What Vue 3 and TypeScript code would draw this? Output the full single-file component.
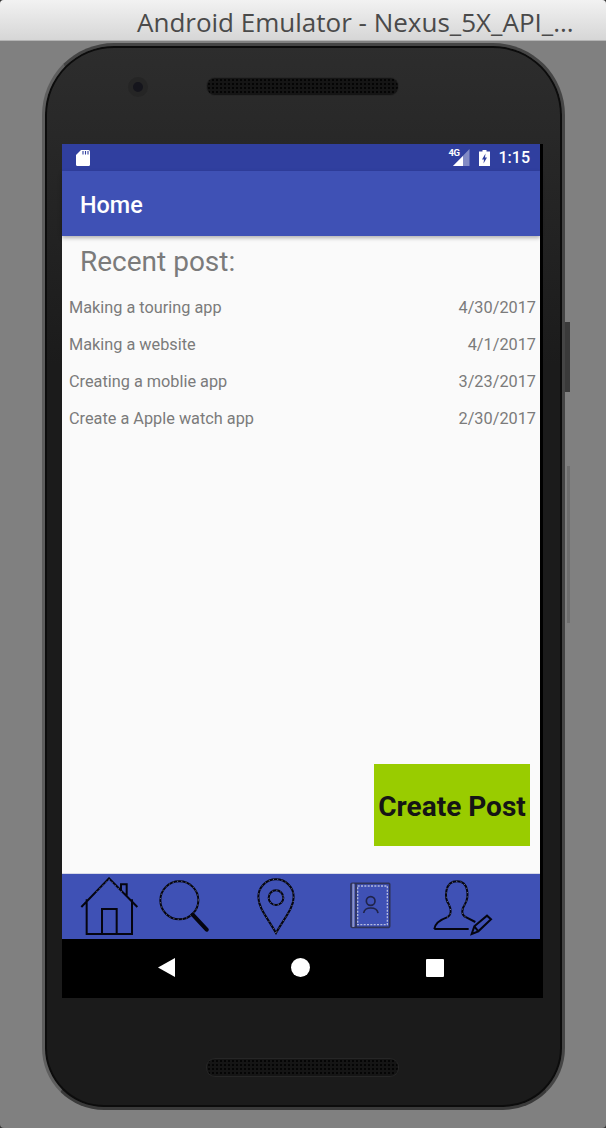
<template>
  <div class="window">
    <div class="titlebar">Android Emulator - Nexus_5X_API_...</div>
    <div class="stage">
      <div class="phone">
        <span class="camera"></span>
        <span class="side-btn power"></span>
        <span class="side-btn volume"></span>
        <div class="bezel-top">
          <div class="speaker"></div>
        </div>
        <div class="screen">
          <div class="statusbar">
            <svg class="sd" viewBox="0 0 14 16">
              <path d="M5 0H12.5Q14 0 14 1.5V14.5Q14 16 12.5 16H1.5Q0 16 0 14.5V5Z" fill="#fff" />
              <path d="M7 1V4.5M9.5 1V4.5M12 1V4.5" stroke="#303f9f" stroke-width="1.1" />
            </svg>
            <span class="status-right">
              <svg class="signal" viewBox="0 0 17 17">
                <path d="M16.5 0V17H0Z" fill="#fff" opacity=".4" />
                <path d="M10 7V17H0Z" fill="#fff" />
              </svg>
              <span class="net">4G</span>
              <svg class="battery" viewBox="0 0 11 16">
                <path d="M3.5 0H7.5V1.5H11V16H0V1.5H3.5Z" fill="#fff" />
                <path d="M6.5 3.5L3 9.5H5L4.5 13.5L8 7.5H6Z" fill="#303f9f" />
              </svg>
              <span class="time">1:15</span>
            </span>
          </div>
          <div class="appbar">Home</div>
          <div class="content">
            <div class="heading">Recent post:</div>
            <div v-for="post in posts" :key="post.title" class="post">
              <span>{{ post.title }}</span>
              <span>{{ post.date }}</span>
            </div>
            <button class="create">Create Post</button>
          </div>
          <div class="tabs">
            <svg class="tab-home" viewBox="60 38 176 176">
              <path d="M64 128L147 42L232 128M183 80V60H200V97M80 105V209H216V105M126 209V134H170V209" />
              <path class="dots" d="M110 82L147 44L185 82" />
            </svg>
            <svg class="tab-search" viewBox="296 45 152 158">
              <circle cx="357" cy="106" r="57" />
              <circle class="dots" cx="357" cy="106" r="57" />
              <path class="handle" d="M397 149L439 194" />
            </svg>
            <svg class="tab-pin" viewBox="590 40 120 170">
              <path d="M650 205C625 160 597 130 597 97A53 53 0 1 1 703 97C703 130 675 160 650 205Z" />
              <circle cx="650" cy="99" r="22" />
              <path class="dots" d="M650 205C625 160 597 130 597 97A53 53 0 1 1 703 97C703 130 675 160 650 205Z" />
              <circle class="dots" cx="650" cy="99" r="22" />
            </svg>
            <svg class="tab-book" viewBox="148 55 122 140">
              <rect class="cover" x="151" y="59" width="116" height="132" rx="3" />
              <path class="spine" d="M158 60V190" />
              <path class="cover" d="M166 60V190" />
              <rect class="page" x="171" y="67" width="89" height="116" />
              <circle class="face" cx="210" cy="112" r="13" />
              <path class="face" d="M189 148C191 128 229 128 232 148" />
            </svg>
            <svg class="tab-user" viewBox="398 46 180 168">
              <path d="M402 193C404 175 420 165 440 158C455 150 452 132 445 118C432 100 432 50 470 50C508 50 505 100 494 118C485 132 480 150 498 158L525 172M402 193H505" />
              <path class="dots" d="M440 158C455 150 452 132 445 118C432 100 432 50 470 50C508 50 505 100 494 118C485 132 480 150 498 158" />
              <path d="M514 208L522 185L560 153L572 164L534 200ZM522 185L534 200" />
            </svg>
          </div>
          <div class="navbar">
            <svg class="nav-back" viewBox="0 0 17 19"><path d="M17 0V19L0 9.5Z" /></svg>
            <svg class="nav-home" viewBox="0 0 19 19"><circle cx="9.5" cy="9.5" r="9.5" /></svg>
            <svg class="nav-recent" viewBox="0 0 18 18"><rect width="18" height="18" rx="1" /></svg>
          </div>
        </div>
        <div class="bezel-bottom">
          <div class="speaker"></div>
        </div>
      </div>
    </div>
  </div>
</template>

<script setup lang="ts">
interface Post {
  title: string;
  date: string;
}

const posts: Post[] = [
  { title: 'Making a touring app', date: '4/30/2017' },
  { title: 'Making a website', date: '4/1/2017' },
  { title: 'Creating a moblie app', date: '3/23/2017' },
  { title: 'Create a Apple watch app', date: '2/30/2017' },
];
</script>

<style>
html,
body {
  margin: 0;
  background: #333;
}
</style>

<style scoped>
.window {
  width: 606px;
  height: 1128px;
  display: flex;
  flex-direction: column;
  background: #808080;
  border-radius: 4px;
  overflow: hidden;
  font-family: Roboto, sans-serif;
}

.titlebar {
  height: 41px;
  flex: none;
  box-sizing: border-box;
  padding: 6px 0 0 137px;
  font-family: "Open Sans", sans-serif;
  font-size: 26px;
  line-height: 32px;
  white-space: nowrap;
  color: #4a4a4a;
  background: linear-gradient(#f2f2f2, #d6d6d6);
  border-bottom: 1px solid #b4b4b4;
}

.stage {
  flex: 1;
  padding: 2px 0 0 42px;
}

.phone {
  position: relative;
  width: 523px;
  height: 1067px;
  box-sizing: border-box;
  border: 3px solid #454545;
  border-left-color: #5e5e5e;
  border-bottom-color: #3a3a3a;
  border-radius: 72px 72px 62px 62px;
  box-shadow: inset 0 0 0 2px #0c0c0c;
  background: linear-gradient(#2d2d2d, #1b1b1b 30%, #1b1b1b);
  padding-left: 17px;
}

.camera {
  position: absolute;
  left: 83px;
  top: 31px;
  width: 10px;
  height: 10px;
  border-radius: 50%;
  background: #15151c;
  border: 5px solid #252525;
}

.side-btn {
  position: absolute;
}

.power {
  right: -8px;
  top: 276px;
  width: 5px;
  height: 70px;
  background: #3a3a3a;
}

.volume {
  right: -8px;
  top: 420px;
  width: 3px;
  height: 157px;
  background: #6e6e6e;
}

.bezel-top {
  height: 98px;
  box-sizing: border-box;
  padding: 32px 0 0 145px;
}

.bezel-bottom {
  padding: 61px 0 0 145px;
}

.speaker {
  width: 191px;
  height: 17px;
  border-radius: 8px;
  background: #151515 radial-gradient(#050505 35%, transparent 45%) 0 0 / 4px 4px;
  box-shadow: 0 0 0 1px #262626;
}

.screen {
  width: 481px;
  height: 854px;
  display: flex;
  flex-direction: column;
  background: #000;
}

.statusbar {
  height: 27px;
  width: 478px;
  flex: none;
  box-sizing: border-box;
  display: flex;
  align-items: center;
  justify-content: space-between;
  padding: 0 10px 0 14px;
  background: #303f9f;
}

.sd {
  width: 14px;
  height: 16px;
}

.status-right {
  position: relative;
  display: flex;
  align-items: center;
}

.signal {
  width: 17px;
  height: 17px;
  margin-right: 9px;
}

.net {
  position: absolute;
  left: -4px;
  top: -1px;
  font-size: 9.5px;
  font-weight: 700;
  letter-spacing: -0.5px;
  line-height: 11px;
  color: #fff;
}

.battery {
  width: 11px;
  height: 16px;
  margin-right: 9px;
}

.time {
  font-size: 16px;
  font-weight: 500;
  color: #fff;
}

.appbar {
  height: 65px;
  width: 478px;
  flex: none;
  box-sizing: border-box;
  padding: 2px 0 0 18px;
  display: flex;
  align-items: center;
  font-size: 23.4px;
  font-weight: 500;
  color: #fff;
  background: #3f51b5;
  box-shadow: 0 2px 4px rgba(0, 0, 0, 0.3);
  position: relative;
}

.content {
  flex: 1;
  width: 478px;
  box-sizing: border-box;
  display: flex;
  flex-direction: column;
  padding: 0 4px 27px 7px;
  background: #fafafa;
  color: #7b7b7b;
}

.heading {
  height: 53px;
  line-height: 52px;
  padding-left: 11px;
  font-size: 28px;
}

.post {
  height: 37px;
  display: flex;
  align-items: center;
  justify-content: space-between;
  font-size: 16.3px;
}

.create {
  width: 156px;
  height: 82px;
  margin-top: auto;
  margin-right: 6px;
  align-self: flex-end;
  border: 0;
  padding: 2px 0 0;
  font-family: Roboto, sans-serif;
  font-size: 28px;
  font-weight: 700;
  white-space: nowrap;
  color: #151515;
  background: #99cc00;
}

.tabs {
  height: 66px;
  width: 478px;
  flex: none;
  box-sizing: border-box;
  display: flex;
  align-items: flex-start;
  background: #3f51b5;
  border-top: 1px solid #d7d9e8;
}

.tabs svg {
  flex: none;
  fill: none;
  stroke: #050510;
  stroke-width: 6;
}

.tabs .dots {
  stroke: #aab0d4;
  stroke-width: 2;
  stroke-dasharray: 3 10;
}

.tabs .handle {
  stroke-width: 12;
  stroke-linecap: round;
}

.tab-home {
  width: 58.7px;
  height: 58.7px;
  margin: 3px 0 0 18px;
}

.tab-search {
  width: 50.7px;
  height: 52.7px;
  margin: 6px 0 0 20px;
}

.tab-pin {
  width: 40px;
  height: 56.7px;
  margin: 4px 0 0 47px;
}

.tab-book {
  width: 40.7px;
  height: 46.7px;
  margin: 8px 0 0 54px;
}

.tabs .cover {
  stroke: #2f3358;
  stroke-width: 5;
}

.tabs .spine {
  stroke: #8c93c4;
  stroke-width: 6;
}

.tabs .page {
  stroke: #b4bade;
  stroke-width: 4;
  stroke-dasharray: 6 4;
}

.tabs .face {
  stroke: #20244a;
  stroke-width: 5;
}

.tab-user {
  width: 60px;
  height: 56px;
  margin: 6px 0 0 42px;
}

.navbar {
  height: 59px;
  flex: none;
  display: flex;
  align-items: center;
  padding-bottom: 2px;
  box-sizing: border-box;
  fill: #fff;
}

.nav-back {
  width: 17px;
  height: 19px;
  margin-left: 96px;
}

.nav-home {
  width: 19px;
  height: 19px;
  margin-left: 116px;
}

.nav-recent {
  width: 18px;
  height: 18px;
  margin-left: 116px;
}
</style>
